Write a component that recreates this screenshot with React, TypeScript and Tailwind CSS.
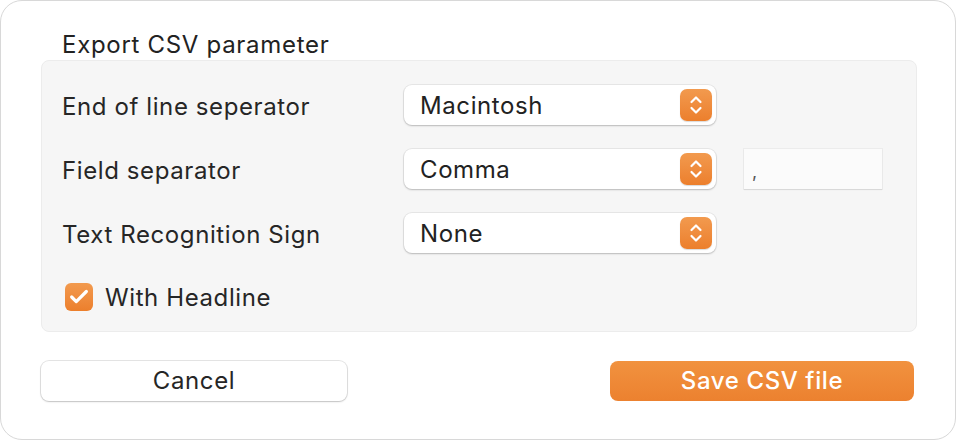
import { Check } from "lucide-react";

const Stepper = () => (
  <div className="w-[32px] h-[32px] rounded-[7px] bg-gradient-to-b from-[#f29a4e] to-[#ec7f2c] flex items-center justify-center shadow-[0_1px_1px_rgba(0,0,0,0.15)]">
    <svg width="16" height="22" viewBox="0 0 16 22" fill="none" stroke="#fff" strokeWidth="2.2" strokeLinecap="round" strokeLinejoin="round">
      <path d="M3.5 8 L8 3.5 L12.5 8" />
      <path d="M3.5 14 L8 18.5 L12.5 14" />
    </svg>
  </div>
);

const PopUp = ({ value }: { value: string }) => (
  <div className="w-[312px] h-[40px] bg-white rounded-[8px] shadow-[0_0_0_1px_rgba(0,0,0,0.06),0_1px_2px_rgba(0,0,0,0.2)] flex items-center justify-between pl-[16px] pr-[4px]">
    <span className="pt-[1px] text-[24px] tracking-[0.6px] text-[#222]">{value}</span>
    <Stepper />
  </div>
);

const Row = ({ label, value, extra }: { label: string; value: string; extra?: boolean }) => (
  <div className="flex items-center h-[40px]">
    <span className="w-[342px] pt-[4px] text-[24px] tracking-[0.6px] text-[#262626]">{label}</span>
    <PopUp value={value} />
    {extra && (
      <div className="ml-[28px] w-[138px] h-[40px] bg-[#fbfbfb] shadow-[0_0_0_1px_rgba(0,0,0,0.04),0_1px_1px_rgba(0,0,0,0.08)] flex items-end pl-[8px] pb-[4px] text-[18px] text-[#555]">
        ,
      </div>
    )}
  </div>
);

export default function App() {
  return (
    <div className="w-[956px] h-[440px] bg-white font-['Inter',sans-serif]">
      <div className="w-[956px] h-[440px] rounded-[22px] border border-[#d8d8d8] bg-white px-[40px] pt-[29px]">
        <div className="pl-[21px] text-[24px] tracking-[0.7px] text-[#222] leading-[30px]">Export CSV parameter</div>
        <div className="w-[876px] h-[272px] rounded-[8px] bg-[#f6f6f6] border border-[#ececec] pl-[20px] pt-[24px] flex flex-col gap-[24px]">
          <Row label="End of line seperator" value="Macintosh" />
          <Row label="Field separator" value="Comma" extra />
          <Row label="Text Recognition Sign" value="None" />
          <div className="flex items-center gap-[12px] pl-[3px] h-[40px]">
            <div className="w-[28px] h-[28px] rounded-[6px] bg-gradient-to-b from-[#f29a4e] to-[#ec7f2c] flex items-center justify-center">
              <Check size={22} color="#fff" strokeWidth={3.5} />
            </div>
            <span className="pt-[2px] text-[24px] tracking-[0.6px] text-[#262626]">With Headline</span>
          </div>
        </div>
        <div className="mt-[29px] flex justify-between pr-[1px]">
          <button className="w-[306px] h-[40px] rounded-[8px] bg-white shadow-[0_0_0_1px_rgba(0,0,0,0.1),0_1px_2px_rgba(0,0,0,0.15)] text-[24px] tracking-[0.6px] text-[#262626]">
            Cancel
          </button>
          <button className="w-[304px] h-[40px] rounded-[8px] bg-gradient-to-b from-[#f1923f] to-[#ec812f] text-[24px] tracking-[0.6px] font-medium text-white">
            Save CSV file
          </button>
        </div>
      </div>
    </div>
  );
}
